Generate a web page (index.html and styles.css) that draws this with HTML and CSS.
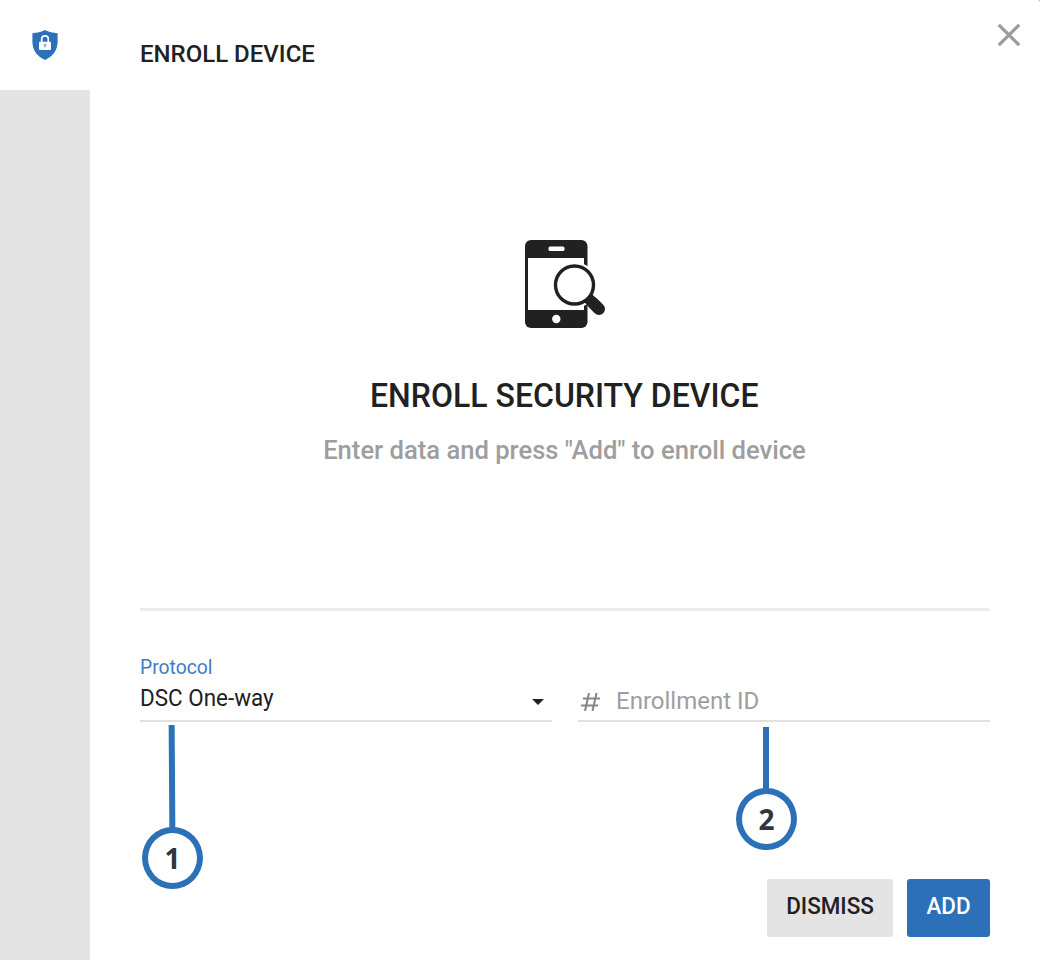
FILE: index.html
```html
<!DOCTYPE html>
<html lang="en">
<head>
  <meta charset="utf-8">
  <title>Enroll device</title>
  <link rel="stylesheet" href="styles.css">
</head>
<body>
  <div class="dialog">
    <div class="sidebar">
      <div class="tab">
        <svg class="shield" width="26" height="31" viewBox="0 0 26 31">
          <path fill="#2c71b8" d="M13 0C9.500 1.800 5 2.900.4 3.200V12c0 8.500 5.200 14.500 12.600 18C20.400 26.500 25.600 20.500 25.600 12V3.200C21 2.900 16.500 1.800 13 0z"/>
          <path fill="none" stroke="#fff" stroke-width="1.700" d="M9.700 12.500V9a3.300 3.100 0 0 1 6.600 0v3.500"/>
          <rect x="7" y="11.700" width="12" height="8.200" rx="1" fill="#fff"/>
          <circle cx="13" cy="15" r="1.500" fill="#8db4db"/>
          <path stroke="#8db4db" stroke-width="1.200" d="M13 15v2.600"/>
        </svg>
      </div>
    </div>

    <div class="main">
      <div class="header">
        <h1>ENROLL DEVICE</h1>
        <svg class="close" width="24" height="24" viewBox="0 0 24 24">
          <path stroke="#9b9b9b" stroke-width="3.200" d="M1.800 1.800l20.400 20.400M22.200 1.800L1.800 22.200"/>
        </svg>
      </div>

      <div class="intro">
        <svg class="phone" width="82" height="90" viewBox="0 0 82 90">
          <rect x="1" y="1" width="62.500" height="88" rx="6" fill="#212121"/>
          <rect x="4" y="19" width="56" height="52" fill="#fff"/>
          <rect x="24.500" y="7.500" width="16" height="4.500" rx="1.500" fill="#fff"/>
          <circle cx="32.300" cy="80" r="4.200" fill="#fff"/>
          <circle cx="50.500" cy="46" r="23" fill="#fff"/>
          <circle cx="50.500" cy="46" r="19" fill="#fff" stroke="#212121" stroke-width="3.400"/>
          <path stroke="#212121" stroke-width="12" stroke-linecap="round" d="M69 64l6 6"/>
          <path stroke="#212121" stroke-width="11" d="M63.500 58.500l5 5"/>
        </svg>
        <h2>ENROLL SECURITY DEVICE</h2>
        <p>Enter data and press "Add" to enroll device</p>
      </div>

      <form class="fields">
        <div class="field">
          <label>Protocol</label>
          <div class="select">
            <span>DSC One-way</span>
            <i class="arrow"></i>
          </div>
          <div class="marker marker1"><b>1</b></div>
        </div>
        <div class="field">
          <div class="input">
            <svg width="19" height="18" viewBox="0 0 19 18">
              <path fill="none" stroke="#858585" stroke-width="2" d="M8 0L4 18M15.500 0l-4 18M2 5.500h17M0 12.500h17"/>
            </svg>
            <span>Enrollment ID</span>
          </div>
          <div class="marker marker2"><b>2</b></div>
        </div>
      </form>

      <div class="buttons">
        <button type="button" class="btn"><span>DISMISS</span></button>
        <button type="button" class="btn btn-add"><span>ADD</span></button>
      </div>
    </div>
  </div>
</body>
</html>
```

FILE: styles.css
```css
body { margin: 0; background: #bdbdbd; font-family: Roboto, sans-serif; color: #212121; }
h1, h2, p { margin: 0; font-weight: 500; white-space: nowrap; }
svg { display: block; flex: none; }
.dialog {
  display: flex;
  height: 960px;
  overflow: hidden;
  background: #fff;
  border-top-right-radius: 3px;
}
.sidebar { width: 90px; background: #e4e4e4; }
.tab { height: 90px; background: #fff; }
.shield { padding: 30px 0 0 32px; }
.main {
  flex: 1;
  display: flex;
  flex-direction: column;
  padding: 0 50px;
}
.header { display: flex; justify-content: space-between; height: 90px; }
h1 { font-size: 24px; line-height: 28px; padding-top: 40px; }
.close { margin: 23px -31px 0 0; }
.intro {
  display: flex;
  flex-direction: column;
  align-items: center;
  height: 518px;
  padding-right: 1px;
  border-bottom: 3px solid #ececec;
}
.phone { margin-top: 149px; }
h2 { font-size: 33px; line-height: 40px; margin-top: 47px; transform: scaleX(0.97); }
.intro p { font-size: 25.6px; line-height: 30px; margin-top: 19px; color: #9e9e9e; }
.fields { display: flex; gap: 26px; height: 268px; }
.field { position: relative; flex: 1; height: 109px; border-bottom: 2px solid #e0e0e0; }
.field label {
  display: block;
  padding-top: 44px;
  font-size: 20px;
  line-height: 24px;
  color: #3c7dc4;
  transform: scaleX(0.965);
  transform-origin: left;
}
.select {
  display: flex;
  justify-content: space-between;
  padding: 5px 8px 0 0;
  font-size: 24px;
  line-height: 28px;
}
.select span { transform: scaleX(0.935); transform-origin: left; }
.arrow {
  margin-top: 15px;
  height: 0;
  border: 6px solid transparent;
  border-top-color: #212121;
  border-bottom: 0;
}
.input {
  display: flex;
  gap: 16px;
  padding: 76px 0 0 3px;
  font-size: 24px;
  line-height: 28px;
  color: #9e9e9e;
}
.input svg { margin-top: 6px; }
/* numbered callouts hanging from the fields */
.marker {
  position: absolute;
  box-sizing: border-box;
  width: 61px;
  height: 62px;
  border: 6px solid #2c71b8;
  border-radius: 50%;
  background: #fff;
  text-align: center;
  font: 700 28px/51px "Noto Sans", sans-serif;
  color: #2f3640;
}
.marker b { font-weight: 700; }
.marker:before {
  content: "";
  position: absolute;
  left: 21px;
  bottom: 54px;
  width: 6px;
  background: #2c71b8;
}
.marker1 { left: 2px; top: 216px; }
.marker1:before { height: 104px; transform: rotate(-0.4deg); }
.marker2 { left: 158px; top: 177px; }
.marker2:before { height: 63px; }
.buttons { display: flex; justify-content: flex-end; gap: 14px; }
.btn {
  width: 126px;
  height: 58px;
  padding: 0 0 4px;
  border: none;
  border-radius: 3px;
  background: #e4e4e4;
  color: #212121;
  font: 500 24px Roboto, sans-serif;
}
.btn span { display: block; transform: scaleX(0.935); }
.btn-add { width: 83px; background: #2c71b8; color: #fff; }
```
